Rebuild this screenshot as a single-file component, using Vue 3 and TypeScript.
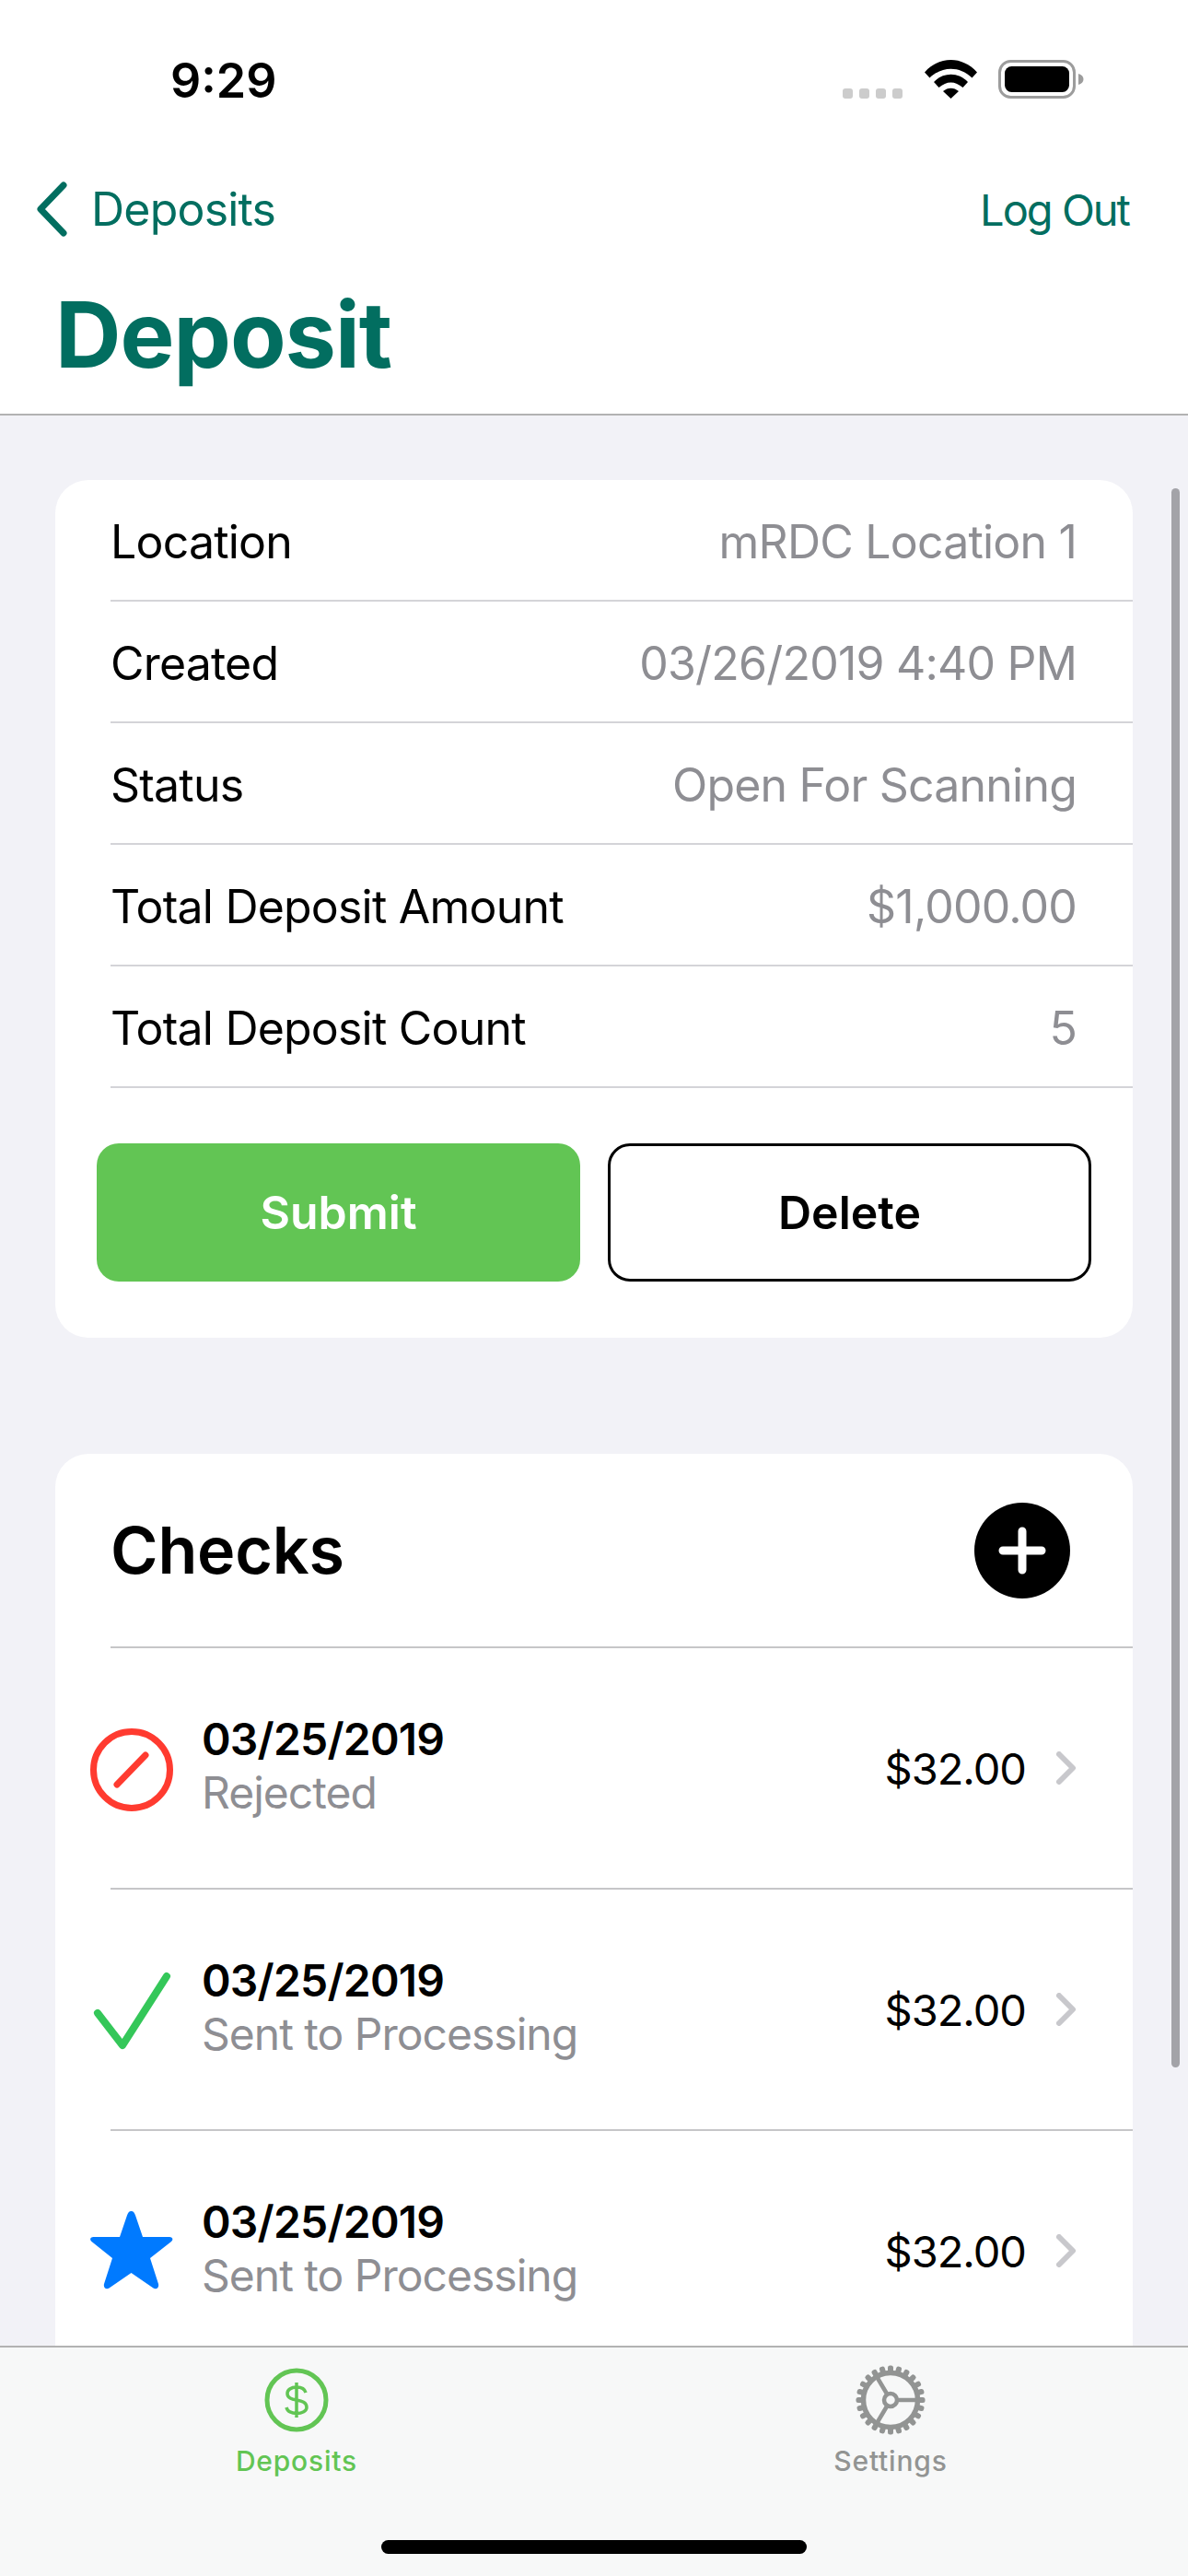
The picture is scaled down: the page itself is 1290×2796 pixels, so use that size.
<template>
  <div class="phone">
    <header class="top">
      <div class="status">
        <span class="time">9:29</span>
        <div class="status-icons">
          <div class="signal"><i v-for="n in 4" :key="n"></i></div>
          <svg class="wifi" width="57" height="42" viewBox="0 0 57 42">
            <path d="M0 13.5 C16 -4.5 41 -4.5 57 13.5 L51.5 19.5 C38 6.5 19 6.5 5.500 19.500 Z" fill="#000" />
            <path d="M10 24 C20 13 37 13 47 24 L41.500 30 C33 22.500 24 22.500 15.500 30 Z" fill="#000" />
            <path d="M20 34 C25 29.500 32 29.500 37 34 L28.500 42 Z" fill="#000" />
          </svg>
          <svg class="battery" width="93" height="42" viewBox="0 0 93 42">
            <rect x="1.500" y="1.500" width="81" height="39" rx="12" fill="none" stroke="#9c9c9c" stroke-width="3" />
            <rect x="7" y="7" width="70" height="28" rx="7.500" fill="#000" />
            <path d="M87 15 C90.500 16 92.500 18 92.500 21 C92.500 24 90.500 26 87 27 Z" fill="#9c9c9c" />
          </svg>
        </div>
      </div>
      <nav class="nav">
        <div class="back">
          <svg width="36" height="60" viewBox="0 0 36 60">
            <path d="M31 4 L6 30 L31 56" fill="none" stroke="#026e60" stroke-width="7" stroke-linecap="round" stroke-linejoin="round" />
          </svg>
          <span>Deposits</span>
        </div>
        <span class="logout">Log Out</span>
      </nav>
      <h1 class="title">Deposit</h1>
    </header>

    <main class="content">
      <section class="card info">
        <div class="info-row" v-for="row in infoRows" :key="row.label">
          <span>{{ row.label }}</span>
          <span class="muted">{{ row.value }}</span>
        </div>
        <div class="actions">
          <button class="btn submit">Submit</button>
          <button class="btn delete">Delete</button>
        </div>
      </section>

      <section class="card checks">
        <div class="checks-head">
          <h2>Checks</h2>
          <svg width="104" height="104" viewBox="0 0 104 104">
            <circle cx="52" cy="52" r="52" fill="#000" />
            <path d="M52 31 V73 M31 52 H73" stroke="#fff" stroke-width="9" stroke-linecap="round" />
          </svg>
        </div>
        <div class="check-row" v-for="(c, i) in checks" :key="i">
          <div class="check-icon">
            <svg v-if="c.kind === 'rejected'" width="90" height="90" viewBox="0 0 90 90">
              <circle cx="45" cy="45" r="41.500" fill="none" stroke="#ff3b30" stroke-width="7" />
              <path d="M29 61 L60 29" fill="none" stroke="#ff3b30" stroke-width="7" stroke-linecap="round" />
            </svg>
            <svg v-else-if="c.kind === 'sent'" width="90" height="90" viewBox="0 0 90 90">
              <path d="M8 47 L35 82 L83 7" fill="none" stroke="#34c759" stroke-width="8" stroke-linecap="round" stroke-linejoin="round" />
            </svg>
            <svg v-else width="90" height="90" viewBox="0 0 90 90">
              <path d="M44.500 0 C47 0 48 2 49 4.500 L57 28 L86 28 C89.500 28 90.500 31 88 33 L65 51 L74 79 C75 83.500 71.500 85.500 68.500 83.500 L44.500 67 L20.500 83.500 C17.500 85.500 14 83.500 15 79 L24 51 L1.500 33 C-1 31 0 28 3.500 28 L32 28 L40 4.500 C41 2 42 0 44.500 0 Z" fill="#007aff" />
            </svg>
          </div>
          <div class="check-text">
            <div class="date">{{ c.date }}</div>
            <div class="muted sub">{{ c.status }}</div>
          </div>
          <span class="amount">{{ c.amount }}</span>
          <svg class="chev" width="22" height="36" viewBox="0 0 22 36">
            <path d="M3 3 L18 18 L3 33" fill="none" stroke="#c8c8cc" stroke-width="6" stroke-linecap="round" stroke-linejoin="round" />
          </svg>
        </div>
      </section>
    </main>

    <footer class="tabs">
      <div class="tab active">
        <div class="tab-icon">
          <svg width="70" height="70" viewBox="0 0 70 70">
            <circle cx="35" cy="35" r="32" fill="none" stroke="#62c554" stroke-width="5" />
            <path d="M45 27 C44 23 40 21 35 21 C29 21 25 24 25 28 C25 38 46 32 46 43 C46 47 41 49.500 35 49.500 C30 49.500 25 47.500 24 43 M35 16 V54" fill="none" stroke="#62c554" stroke-width="3.500" />
          </svg>
        </div>
        <span>Deposits</span>
      </div>
      <div class="tab">
        <div class="tab-icon">
          <svg width="76" height="76" viewBox="0 0 76 76">
            <rect v-for="a in teeth" :key="a" x="35" y="0.500" width="6" height="9" rx="2.500" fill="#929493" :transform="`rotate(${a} 38 38)`" />
            <circle cx="38" cy="38" r="29.500" fill="none" stroke="#929493" stroke-width="5.500" />
            <circle cx="38" cy="38" r="7" fill="none" stroke="#929493" stroke-width="4.500" />
            <path d="M45 38 H67 M34.500 32 L22 11 M34.500 44 L22 65" fill="none" stroke="#929493" stroke-width="4.500" />
          </svg>
        </div>
        <span>Settings</span>
      </div>
      <div class="home"></div>
    </footer>

    <div class="scrollbar"></div>
  </div>
</template>

<script setup lang="ts">
const infoRows = [
  { label: 'Location', value: 'mRDC Location 1' },
  { label: 'Created', value: '03/26/2019 4:40 PM' },
  { label: 'Status', value: 'Open For Scanning' },
  { label: 'Total Deposit Amount', value: '$1,000.00' },
  { label: 'Total Deposit Count', value: '5' }
]

const checks = [
  { kind: 'rejected', date: '03/25/2019', status: 'Rejected', amount: '$32.00' },
  { kind: 'sent', date: '03/25/2019', status: 'Sent to Processing', amount: '$32.00' },
  { kind: 'star', date: '03/25/2019', status: 'Sent to Processing', amount: '$32.00' }
]

// gear teeth, every 15 degrees
const teeth = Array.from({ length: 24 }, (_, i) => i * 15)
</script>

<style>
html, body {
  margin: 0;
  background: #f2f2f7;
}
</style>

<style scoped>
.phone {
  position: relative;
  width: 1290px;
  height: 2796px;
  display: flex;
  flex-direction: column;
  overflow: hidden;
  background: #f2f2f7;
  font-family: Inter, "Liberation Sans", sans-serif;
  font-size: 50px;
  letter-spacing: -0.8px;
  color: #000;
}
.top {
  height: 449px;
  flex: none;
  background: #fff;
  border-bottom: 2px solid #b2b2b2;
}
.status {
  height: 65px;
  padding-top: 65px;
  display: flex;
  justify-content: space-between;
  align-items: flex-start;
}
.time {
  margin-left: 185px;
  margin-top: 2px;
  font-size: 52px;
  font-weight: 600;
  line-height: 42px;
  letter-spacing: 0;
}
.status-icons {
  margin-right: 113px;
  display: flex;
  align-items: flex-end;
}
.signal {
  display: flex;
  gap: 7px;
  margin-right: 24px;
}
.signal i {
  width: 11px;
  height: 11px;
  border-radius: 3px;
  background: #ccc;
}
.wifi {
  margin-right: 23px;
}
.nav {
  height: 60px;
  margin-top: 67px;
  padding: 0 64px 0 38px;
  display: flex;
  justify-content: space-between;
  align-items: center;
  color: #026e60;
}
.back {
  display: flex;
  align-items: center;
  gap: 25px;
}
.logout {
  font-size: 47px;
  letter-spacing: -2px;
}
.title {
  margin: 56px 0 0 60px;
  font-size: 99px;
  font-weight: 700;
  line-height: 100px;
  letter-spacing: -1px;
  color: #026e60;
}
.content {
  flex: 1;
  min-height: 0;
  padding: 70px 60px 0;
  display: flex;
  flex-direction: column;
  gap: 126px;
}
.card {
  background: #fff;
  border-radius: 36px;
  flex: none;
}
.info {
  height: 931px;
  box-sizing: border-box;
}
.info-row {
  height: 132px;
  margin-left: 60px;
  padding: 3px 61px 0 0;
  box-sizing: border-box;
  display: flex;
  justify-content: space-between;
  align-items: center;
  border-bottom: 2px solid #d4d4d8;
}
.muted {
  color: #8e8e93;
}
.actions {
  padding: 60px 45px 0;
  display: flex;
  gap: 30px;
}
.btn {
  flex: none;
  width: 525px;
  height: 150px;
  padding: 0;
  box-sizing: border-box;
  border-radius: 24px;
  font-family: inherit;
  font-size: 50px;
  font-weight: 600;
}
.submit {
  background: #62c554;
  border: 0;
  color: #fff;
}
.delete {
  background: #fff;
  border: 3px solid #000;
  color: #000;
}
.checks {
  height: 1200px;
}
.checks-head {
  height: 211px;
  box-sizing: border-box;
  margin-left: 60px;
  padding-right: 68px;
  display: flex;
  justify-content: space-between;
  align-items: center;
  border-bottom: 2px solid #c6c6c8;
}
.checks-head h2 {
  margin: 0;
  font-size: 70px;
  font-weight: 600;
  letter-spacing: -0.2px;
}
.check-row {
  position: relative;
  height: 262px;
  margin-left: 60px;
  box-sizing: border-box;
  display: flex;
  align-items: center;
  border-bottom: 2px solid #c6c6c8;
}
.check-icon {
  width: 90px;
  height: 90px;
  margin: 4px 31px 0 -22px;
  flex: none;
}
.check-text {
  flex: 1;
  font-size: 48px;
  line-height: 58px;
  padding-bottom: 4px;
}
.date {
  font-weight: 600;
}
.sub {
  letter-spacing: -1px;
}
.amount {
  font-size: 47px;
  letter-spacing: -1px;
  margin-right: 33px;
}
.chev {
  margin-right: 61px;
}
.tabs {
  position: absolute;
  left: 0;
  right: 0;
  bottom: 0;
  height: 250px;
  box-sizing: border-box;
  border-top: 2px solid #b2b2b2;
  background: #f7f8f8;
  display: grid;
  grid-template-columns: 644px 1fr;
  padding-top: 19px;
}
.tab {
  display: flex;
  flex-direction: column;
  align-items: center;
  justify-self: center;
  font-size: 30px;
  font-weight: 500;
  letter-spacing: 0.8px;
  color: #929493;
}
.tab.active {
  color: #62c554;
}
.tab-icon {
  height: 76px;
  display: flex;
  align-items: center;
}
.tab span {
  margin-top: 10px;
}
.home {
  position: absolute;
  left: 414px;
  top: 209px;
  width: 462px;
  height: 15px;
  border-radius: 8px;
  background: #000;
}
.scrollbar {
  position: absolute;
  left: 1272px;
  top: 530px;
  width: 9px;
  height: 1714px;
  border-radius: 5px;
  background: #a3a3a8;
}
</style>
